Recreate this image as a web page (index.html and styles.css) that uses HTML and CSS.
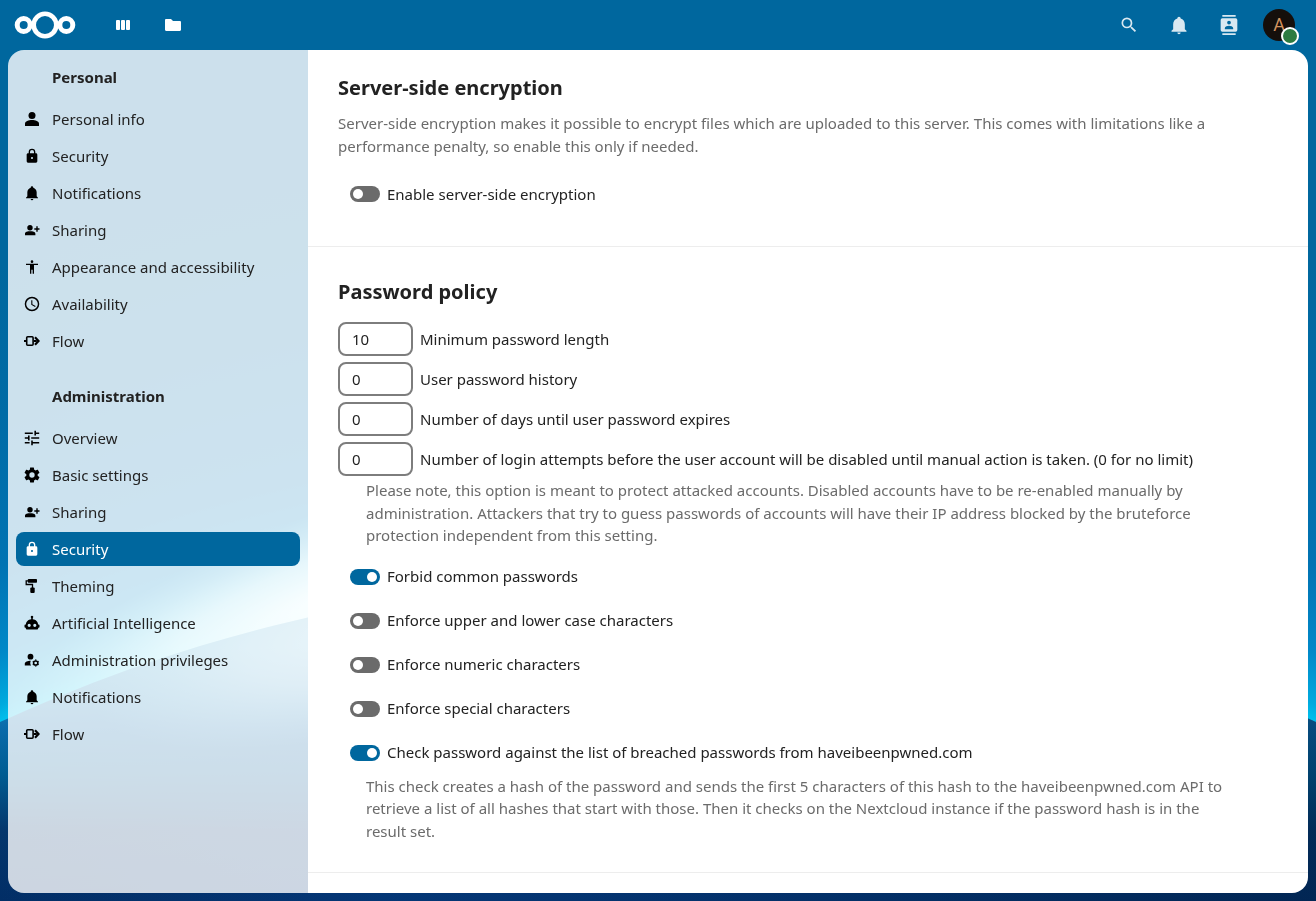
FILE: index.html
```html
<!DOCTYPE html>
<html lang="en">
<head>
<meta charset="utf-8">
<meta name="viewport" content="width=device-width, initial-scale=1">
<title>Security - Administration settings - Nextcloud</title>
<link rel="stylesheet" href="styles.css">
</head>
<body>
<svg class="backdrop" viewBox="0 0 1316 901" preserveAspectRatio="none" aria-hidden="true">
  <defs>
    <radialGradient id="sky" gradientUnits="userSpaceOnUse" cx="658" cy="2155" r="2000">
      <stop offset="0.787" stop-color="#00c4f0"/>
      <stop offset="0.796" stop-color="#00aade"/>
      <stop offset="0.82" stop-color="#0088c8"/>
      <stop offset="0.86" stop-color="#0073b3"/>
      <stop offset="0.93" stop-color="#006ba6"/>
      <stop offset="1" stop-color="#00679e"/>
    </radialGradient>
    <linearGradient id="planet" gradientUnits="userSpaceOnUse" x1="0" y1="620" x2="0" y2="901">
      <stop offset="0.1" stop-color="#30a4d0"/>
      <stop offset="0.38" stop-color="#0a6bab"/>
      <stop offset="0.55" stop-color="#005c92"/>
      <stop offset="0.75" stop-color="#04366c"/>
      <stop offset="1" stop-color="#022e66"/>
    </linearGradient>
    <linearGradient id="night" gradientUnits="userSpaceOnUse" x1="0" y1="0" x2="1316" y2="0">
      <stop offset="0" stop-color="#0a4a9a" stop-opacity="0"/>
      <stop offset="0.3" stop-color="#0a4a9a" stop-opacity="0.3"/>
      <stop offset="1" stop-color="#001a38" stop-opacity="0.4"/>
    </linearGradient>
    <radialGradient id="glow">
      <stop offset="0" stop-color="#fff" stop-opacity="1"/>
      <stop offset="0.5" stop-color="#d8fbff" stop-opacity="0.6"/>
      <stop offset="1" stop-color="#6fe3f5" stop-opacity="0"/>
    </radialGradient>
  </defs>
  <rect width="1316" height="901" fill="url(#sky)"/>
  <ellipse cx="350" cy="592" rx="370" ry="86" fill="url(#glow)" transform="rotate(-20 350 592)"/>
  <circle cx="658" cy="2153" r="1575" fill="url(#planet)"/>
  <circle cx="658" cy="2153" r="1575" fill="url(#night)"/>
  <ellipse cx="400" cy="620" rx="320" ry="105" fill="url(#glow)" opacity="0.6" transform="rotate(-15 400 620)"/>
</svg>

<svg class="sprite" aria-hidden="true">
  <symbol id="i-user" viewBox="0 0 16 16"><circle cx="8" cy="4.500" r="3.500"/><path d="M1 15v-2.300C1 10.200 4.600 9 8 9s7 1.200 7 3.700V15z"/></symbol>
  <symbol id="i-lock" viewBox="0 0 24 24"><path d="M12 16.600A1.600 1.600 0 0 0 13.600 15 1.600 1.600 0 0 0 12 13.400 1.600 1.600 0 0 0 10.400 15 1.600 1.600 0 0 0 12 16.600M18 8a2 2 0 0 1 2 2v10a2 2 0 0 1-2 2H6a2 2 0 0 1-2-2V10c0-1.110.9-2 2-2h1V6a5 5 0 0 1 10 0v2h1M12 3a3 3 0 0 0-3 3v2h6V6a3 3 0 0 0-3-3z"/></symbol>
  <symbol id="i-bell" viewBox="0 0 24 24"><path d="M21 19v1H3v-1l2-2v-6c0-3.100 2.030-5.830 5-6.710V4a2 2 0 0 1 4 0v.29c2.970.88 5 3.610 5 6.710v6l2 2m-7 2a2 2 0 0 1-4 0"/></symbol>
  <symbol id="i-share" viewBox="0 0 16 16"><circle cx="6" cy="5.800" r="2.700"/><path d="M1 13.300v-1.600C1 9.900 3.800 9.300 6.200 9.300s5.200.6 5.200 2.400v1.600zM12.300 4.300h1.400v2h1.800v1.400h-1.800v2h-1.400v-2h-2V6.300h2z"/></symbol>
  <symbol id="i-access" viewBox="0 0 24 24"><path d="M12 2a2 2 0 0 1 0 4 2 2 0 0 1 0-4m9 7h-6v13h-2v-6h-2v6H9V9H3V7h18z"/></symbol>
  <symbol id="i-clock" viewBox="1 1 22 22"><path d="M12 20a8 8 0 1 0 0-16 8 8 0 0 0 0 16m0-18a10 10 0 1 1 0 20 10 10 0 0 1 0-20m.5 5v5.250l4.500 2.670-.75 1.230L11 13V7z"/></symbol>
  <symbol id="i-flow" viewBox="0 0 16 16"><rect x="2.700" y="3.800" width="6.400" height="8.400" rx="1" fill="none" stroke="currentColor" stroke-width="1.600"/><path d="M0 7h2.200v2H0zM9.800 7h3v2h-3z"/><path d="M11 4.200 14.600 8 11 11.800" fill="none" stroke="currentColor" stroke-width="2.200"/></symbol>
  <symbol id="i-tune" viewBox="2 2 20 20"><path d="M3 17v2h6v-2H3M3 5v2h10V5H3m10 16v-2h8v-2h-8v-2h-2v6h2M7 9v2H3v2h4v2h2V9H7m14 4v-2H11v2h10m-6-4h2V7h4V5h-4V3h-2z"/></symbol>
  <symbol id="i-cog" viewBox="1.500 1.500 21 21"><path d="M12 15.500A3.500 3.500 0 0 1 8.500 12 3.500 3.500 0 0 1 12 8.500a3.500 3.500 0 0 1 3.500 3.500 3.500 3.500 0 0 1-3.500 3.500m7.430-2.530c.04-.32.07-.64.07-.97s-.03-.66-.07-1l2.110-1.630c.19-.15.24-.42.12-.64l-2-3.460c-.12-.22-.39-.31-.61-.22l-2.490 1c-.52-.39-1.060-.73-1.690-.98l-.37-2.650A.506.506 0 0 0 14 2h-4c-.25 0-.46.18-.5.42l-.37 2.650c-.63.25-1.170.59-1.690.98l-2.490-1c-.22-.09-.49 0-.61.22l-2 3.460c-.13.22-.07.49.12.64L4.570 11c-.04.34-.07.67-.07 1s.03.65.07.97l-2.110 1.660c-.19.15-.25.42-.12.64l2 3.460c.12.22.39.3.61.22l2.490-1.010c.52.4 1.060.74 1.690.99l.37 2.650c.04.24.25.42.5.42h4c.25 0 .46-.18.5-.42l.37-2.650c.63-.26 1.170-.59 1.690-.99l2.490 1.010c.22.08.49 0 .61-.22l2-3.460c.12-.22.07-.49-.12-.64z"/></symbol>
  <symbol id="i-roller" viewBox="0 0 16 16"><rect x="3.800" y="1" width="9.200" height="3.800" rx=".8"/><path d="M4.200 2.900H2.200v3.600h6.300V10" fill="none" stroke="currentColor" stroke-width="1.300"/><rect x="6.300" y="9.500" width="4.400" height="5.500" rx="1"/></symbol>
  <symbol id="i-robot" viewBox="0 0 16 16"><path fill-rule="evenodd" d="M8 .7a1.300 1.300 0 0 1 .8 2.300v1.200c3 .2 5.200 2.400 5.300 5.300h.6c.5 0 .8.3.8.8v1.700c0 .5-.3.800-.8.800h-.5v.4c0 .8-.6 1.400-1.400 1.400H3.200c-.8 0-1.400-.6-1.400-1.400v-.4h-.5c-.5 0-.8-.3-.8-.8v-1.700c0-.5.3-.8.8-.8h.6c.1-2.900 2.300-5.100 5.300-5.300V3A1.300 1.300 0 0 1 8 .7M5.200 8.700a1.600 1.600 0 1 0 0 3.200 1.600 1.600 0 0 0 0-3.200m5.600 0a1.600 1.600 0 1 0 0 3.200 1.600 1.600 0 0 0 0-3.200"/></symbol>
  <symbol id="i-admin" viewBox="0 0 16 16"><circle cx="6.500" cy="4.700" r="2.900"/><path d="M.8 13.600v-1.800c0-2 2.900-3 6-3-.8 1.500-.7 3.300.3 4.800z"/><circle cx="11.700" cy="11" r="2.100" fill="none" stroke="currentColor" stroke-width="1.500"/><path d="M11 7.600h1.400v1H11zM11 13.400h1.400v1H11zM8.400 9.900l.7-1.200.9.500-.7 1.200zM13.400 12.800l.7-1.200.9.500-.7 1.200zM15 9.900l-.7-1.200-.9.500.7 1.200zM8.400 12.100l.7 1.200.9-.5-.7-1.200z"/></symbol>
  <symbol id="i-search" viewBox="0 0 24 24"><path d="M9.500 3A6.500 6.500 0 0 1 16 9.500c0 1.610-.59 3.090-1.560 4.230l.27.27h.79l5 5-1.500 1.500-5-5v-.79l-.27-.27A6.516 6.516 0 0 1 9.500 16a6.500 6.500 0 0 1 0-13m0 2C7 5 5 7 5 9.500S7 14 9.500 14 14 12 14 9.500 12 5 9.500 5z"/></symbol>
  <symbol id="i-contacts" viewBox="0 0 24 24"><path d="M20 0H4v2h16V0M4 24h16v-2H4v2M20 4H4a2 2 0 0 0-2 2v12a2 2 0 0 0 2 2h16a2 2 0 0 0 2-2V6a2 2 0 0 0-2-2m-8 2.750a2.250 2.250 0 1 1 0 4.500 2.250 2.250 0 0 1 0-4.500M17 17H7v-1.500c0-1.670 3.330-2.500 5-2.500s5 .83 5 2.500z"/></symbol>
  <symbol id="i-board" viewBox="0 0 20 20"><rect x="3" y="5" width="4" height="10" rx="1"/><rect x="8" y="5" width="4" height="10" rx="1"/><rect x="13" y="5" width="4" height="10" rx="1"/></symbol>
  <symbol id="i-folder" viewBox="0 0 20 20"><path d="M3.200 4H8l2 2h6.800c.7 0 1.200.5 1.200 1.200v7.600c0 .7-.5 1.200-1.200 1.200H3.200c-.7 0-1.200-.5-1.200-1.200V5.200C2 4.500 2.500 4 3.200 4z"/></symbol>
</svg>

<header class="topbar">
  <a class="logo" href="#" aria-label="Nextcloud">
    <svg viewBox="0 0 62 28" width="62" height="28" fill="none" stroke="#fff"><circle cx="31" cy="14" r="11.300" stroke-width="4.600"/><circle cx="9.700" cy="14" r="6.500" stroke-width="5"/><circle cx="52.300" cy="14" r="6.500" stroke-width="5"/></svg>
  </a>
  <nav class="apps" aria-label="Applications">
    <a class="bar-button" href="#" aria-label="Dashboard"><svg class="icon-large"><use href="#i-board"/></svg></a>
    <a class="bar-button" href="#" aria-label="Files"><svg class="icon-large"><use href="#i-folder"/></svg></a>
  </nav>
  <div class="tools">
    <button class="bar-button tool" type="button" aria-label="Search"><svg class="icon-large"><use href="#i-search"/></svg></button>
    <button class="bar-button tool" type="button" aria-label="Notifications"><svg class="icon-large"><use href="#i-bell"/></svg></button>
    <button class="bar-button tool" type="button" aria-label="Contacts"><svg class="icon-large"><use href="#i-contacts"/></svg></button>
    <button class="bar-button" type="button" aria-label="Settings menu"><span class="avatar">A<span class="status"></span></span></button>
  </div>
</header>

<div class="panel">
  <nav class="sidebar" aria-label="Settings">
    <h2 class="nav-title">Personal</h2>
    <ul class="nav-list">
      <li><a class="nav-link" href="#"><svg class="icon"><use href="#i-user"/></svg>Personal info</a></li>
      <li><a class="nav-link" href="#"><svg class="icon"><use href="#i-lock"/></svg>Security</a></li>
      <li><a class="nav-link" href="#"><svg class="icon"><use href="#i-bell"/></svg>Notifications</a></li>
      <li><a class="nav-link" href="#"><svg class="icon"><use href="#i-share"/></svg>Sharing</a></li>
      <li><a class="nav-link" href="#"><svg class="icon"><use href="#i-access"/></svg>Appearance and accessibility</a></li>
      <li><a class="nav-link" href="#"><svg class="icon"><use href="#i-clock"/></svg>Availability</a></li>
      <li><a class="nav-link" href="#"><svg class="icon"><use href="#i-flow"/></svg>Flow</a></li>
    </ul>
    <h2 class="nav-title">Administration</h2>
    <ul class="nav-list">
      <li><a class="nav-link" href="#"><svg class="icon"><use href="#i-tune"/></svg>Overview</a></li>
      <li><a class="nav-link" href="#"><svg class="icon"><use href="#i-cog"/></svg>Basic settings</a></li>
      <li><a class="nav-link" href="#"><svg class="icon"><use href="#i-share"/></svg>Sharing</a></li>
      <li><a class="nav-link active" href="#" aria-current="page"><svg class="icon"><use href="#i-lock"/></svg>Security</a></li>
      <li><a class="nav-link" href="#"><svg class="icon"><use href="#i-roller"/></svg>Theming</a></li>
      <li><a class="nav-link" href="#"><svg class="icon"><use href="#i-robot"/></svg>Artificial Intelligence</a></li>
      <li><a class="nav-link" href="#"><svg class="icon"><use href="#i-admin"/></svg>Administration privileges</a></li>
      <li><a class="nav-link" href="#"><svg class="icon"><use href="#i-bell"/></svg>Notifications</a></li>
      <li><a class="nav-link" href="#"><svg class="icon"><use href="#i-flow"/></svg>Flow</a></li>
    </ul>
  </nav>

  <main class="content">
    <section class="section first">
      <div class="section-body">
        <h2 class="section-title">Server-side encryption</h2>
        <p class="description">Server-side encryption makes it possible to encrypt files which are uploaded to this server. This comes with limitations like a performance penalty, so enable this only if needed.</p>
        <label class="switch-row"><input class="switch" type="checkbox">Enable server-side encryption</label>
      </div>
    </section>
    <section class="section">
      <div class="section-body">
        <h2 class="section-title">Password policy</h2>
        <div class="fields">
          <label class="field"><input class="number" type="number" value="10">Minimum password length</label>
          <label class="field"><input class="number" type="number" value="0">User password history</label>
          <label class="field"><input class="number" type="number" value="0">Number of days until user password expires</label>
          <label class="field"><input class="number" type="number" value="0">Number of login attempts before the user account will be disabled until manual action is taken. (0 for no limit)</label>
        </div>
        <p class="hint after-field">Please note, this option is meant to protect attacked accounts. Disabled accounts have to be re-enabled manually by administration. Attackers that try to guess passwords of accounts will have their IP address blocked by the bruteforce protection independent from this setting.</p>
        <label class="switch-row"><input class="switch" type="checkbox" checked>Forbid common passwords</label>
        <label class="switch-row"><input class="switch" type="checkbox">Enforce upper and lower case characters</label>
        <label class="switch-row"><input class="switch" type="checkbox">Enforce numeric characters</label>
        <label class="switch-row"><input class="switch" type="checkbox">Enforce special characters</label>
        <label class="switch-row"><input class="switch" type="checkbox" checked>Check password against the list of breached passwords from haveibeenpwned.com</label>
        <p class="hint">This check creates a hash of the password and sends the first 5 characters of this hash to the haveibeenpwned.com API to retrieve a list of all hashes that start with those. Then it checks on the Nextcloud instance if the password hash is in the result set.</p>
      </div>
    </section>
  </main>
</div>
</body>
</html>
```

FILE: styles.css
```css
:root {
  --primary: #00679e;
  --text: #222;
  --muted: #6b6b6b;
}

*, *::before, *::after {
  box-sizing: border-box;
}

body {
  margin: 0;
  height: 100vh;
  display: flex;
  flex-direction: column;
  overflow: hidden;
  background: var(--primary);
  color: var(--text);
  font: 15px/1.5 "Noto Sans", sans-serif;
}

h2, p, ul {
  margin: 0;
  padding: 0;
}

svg {
  fill: currentColor;
}

.backdrop {
  position: fixed;
  inset: 0;
  width: 100%;
  height: 100%;
  z-index: -1;
}

.sprite {
  display: none;
}

.icon {
  width: 16px;
  height: 16px;
  flex: none;
  color: #000;
}

.icon-large {
  width: 20px;
  height: 20px;
}

.topbar {
  flex: none;
  height: 50px;
  display: flex;
  align-items: center;
  padding: 0 12px 0 14px;
  color: #fff;
}

.logo {
  display: flex;
}

.logo svg {
  fill: none;
}

.apps {
  display: flex;
  margin-left: 22px;
}

.tools {
  display: flex;
  margin-left: auto;
}

.bar-button {
  width: 50px;
  height: 50px;
  display: flex;
  align-items: center;
  justify-content: center;
  padding: 0;
  border: 0;
  background: none;
  color: #fff;
}

.tool {
  opacity: 0.85;
}

.avatar {
  position: relative;
  width: 32px;
  height: 32px;
  border-radius: 50%;
  background: #150f0b;
  color: #d2935f;
  font: 400 18px/32px Roboto, sans-serif;
  text-align: center;
}

.status {
  position: absolute;
  right: -4px;
  bottom: -4px;
  width: 18px;
  height: 18px;
  border: 2px solid #fff;
  border-radius: 50%;
  background: #2d7b41;
}

.panel {
  flex: 1;
  min-height: 0;
  display: flex;
  margin: 0 8px 8px;
  border-radius: 16px;
  overflow: hidden;
}

.sidebar {
  flex: none;
  width: 300px;
  padding: 5px 8px;
  overflow-y: auto;
  scrollbar-width: none;
  background: rgba(255, 255, 255, 0.8);
}

.nav-title {
  padding: 0 36px;
  font-size: 15px;
  font-weight: 700;
  line-height: 44px;
}

.nav-list {
  display: flex;
  flex-direction: column;
  gap: 3px;
  margin: 3px 0 16px;
  list-style: none;
}

.nav-link {
  height: 34px;
  display: flex;
  align-items: center;
  gap: 12px;
  padding: 0 8px;
  border-radius: 8px;
  color: var(--text);
  text-decoration: none;
}

.nav-link.active,
.nav-link.active .icon {
  color: #fff;
}

.nav-link.active {
  background: var(--primary);
}

.content {
  flex: 1;
  min-width: 0;
  overflow-y: auto;
  scrollbar-width: none;
  background: #fff;
}

.section {
  padding: 30px;
  border-bottom: 1px solid #ededed;
}

.section.first {
  padding-top: 23px;
}

.section-body {
  max-width: 900px;
}

.section-title {
  font-size: 20px;
  font-weight: 700;
  line-height: 30px;
}

.description {
  margin: 9px 0 15px;
  color: var(--muted);
}

.fields {
  display: flex;
  flex-direction: column;
  gap: 6px;
  margin-top: 15px;
}

.field {
  display: flex;
  align-items: center;
  gap: 7px;
}

.number {
  width: 75px;
  height: 34px;
  margin: 0;
  padding: 0 12px;
  border: 2px solid #7d7d7d;
  border-radius: 8px;
  background: #fff;
  color: var(--text);
  font: inherit;
  appearance: textfield;
}

.hint {
  padding-left: 28px;
  color: var(--muted);
}

.after-field {
  margin: 3px 0 8px;
}

.switch-row {
  height: 44px;
  display: flex;
  align-items: center;
  gap: 7px;
  padding-left: 12px;
}

.switch {
  appearance: none;
  width: 30px;
  height: 16px;
  margin: 0;
  display: flex;
  align-items: center;
  padding: 0 3px;
  border-radius: 8px;
  background: var(--muted);
}

.switch::before {
  content: "";
  width: 10px;
  height: 10px;
  border-radius: 50%;
  background: #fff;
}

.switch:checked {
  justify-content: flex-end;
  background: var(--primary);
}
```
